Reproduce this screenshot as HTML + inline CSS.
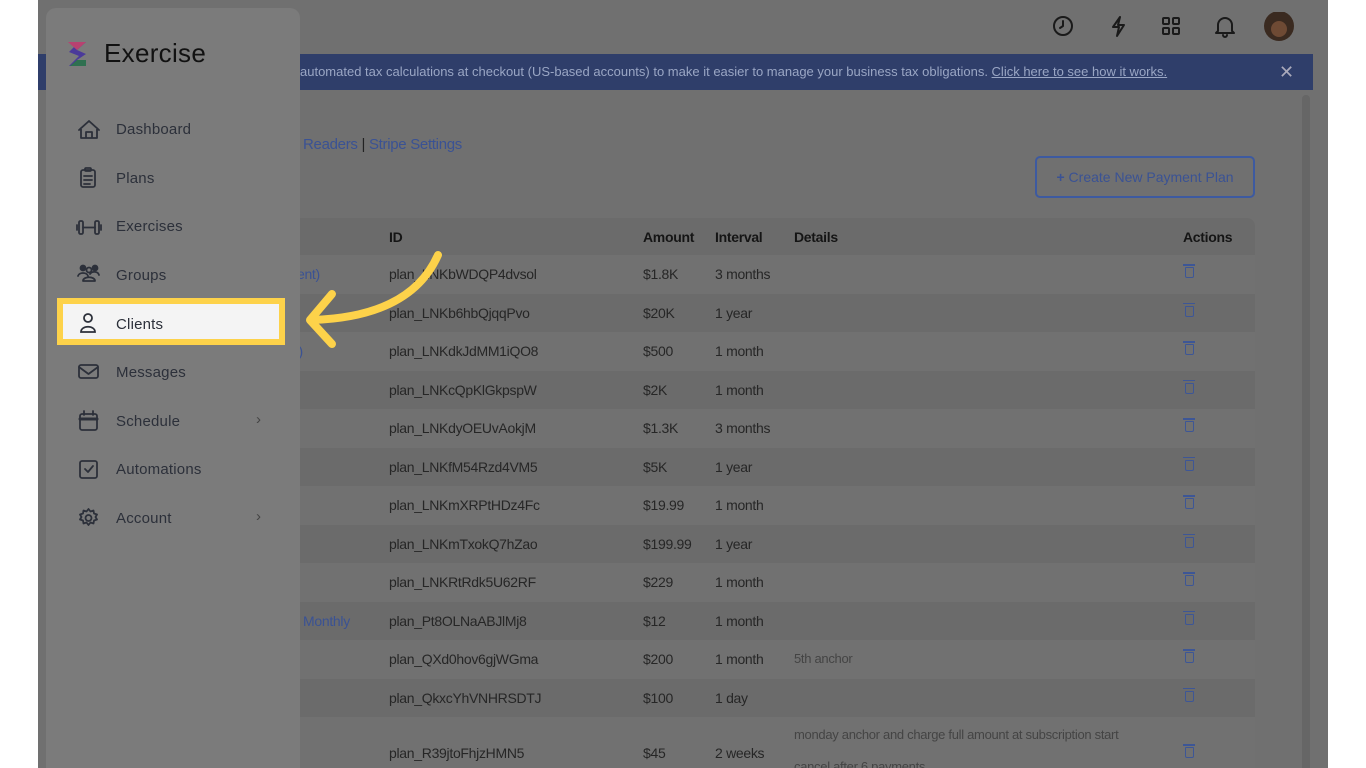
<!DOCTYPE html>
<html><head><meta charset="utf-8"><style>
*{margin:0;padding:0;box-sizing:border-box}
html,body{width:1366px;height:768px;overflow:hidden}
body{background:#fff;position:relative;font-family:"Liberation Sans",sans-serif}
.main{position:absolute;left:38px;top:0;width:1290px;height:768px;background:#707070}
.banner{position:absolute;left:38px;top:54px;width:1275px;height:36px;background:#2f3e6a;color:#9aa6c4;font-size:13px;line-height:36px}
.sb{position:absolute;left:46px;top:8px;width:254px;height:760px;background:#7b7b7b;border-radius:10px 10px 0 0}
.nav{position:absolute;left:116px;font-size:15px;color:#2c303a;letter-spacing:.2px}
.tbl{position:absolute;left:290px;top:218px;width:965px;height:550px;background:#6b6b6b;border-radius:8px 8px 0 0}
.row{position:absolute;left:290px;width:965px;height:38.5px;font-size:14px;letter-spacing:-.3px;color:#262626}
.row span{position:absolute;top:11px}
.tr{position:absolute;left:895px;top:12px;width:9px;height:11px;border:1.5px solid #3d5696;border-radius:1px 1px 2px 2px}
.tr:before{content:"";position:absolute;left:-3px;top:-4px;width:12px;height:1.5px;background:#3d5696}
</style></head><body>
<div class="main"></div>
<div class="banner"><span style="position:absolute;left:262px">automated tax calculations at checkout (US-based accounts) to make it easier to manage your business tax obligations. <u>Click here to see how it works.</u></span><span style="position:absolute;left:1241px;font-size:18px;color:#aab">✕</span></div>
<div style="position:absolute;left:1302px;top:95px;width:8px;height:680px;background:#666;border-radius:4px"></div>
<svg style="position:absolute;left:1050px;top:12px" width="250" height="30" fill="none" stroke="#1a1a1a" stroke-width="2" stroke-linecap="round" stroke-linejoin="round">
<circle cx="13" cy="14" r="9"/><path d="M13 9v5l-3 2"/>
<path d="M70 5l-7 10h6l-2 9 7-11h-6z"/>
<rect x="113" y="6" width="6" height="6" rx="1"/><rect x="123" y="6" width="6" height="6" rx="1"/><rect x="113" y="16" width="6" height="6" rx="1"/><rect x="123" y="16" width="6" height="6" rx="1"/>
<path d="M168 19V13a7 7 0 0 1 14 0v6l2 2h-18zM173 23a2 2 0 0 0 4 0"/>
<circle cx="229" cy="14" r="15" fill="#3a2a20" stroke="none"/><circle cx="229" cy="17" r="8" fill="#6e4a34" stroke="none"/>
</svg>
<div style="position:absolute;left:303px;top:136px;font-size:15px;letter-spacing:-.3px;color:#3a5294">Readers <span style="color:#222">|</span> Stripe Settings</div>
<div style="position:absolute;left:1035px;top:156px;width:220px;height:42px;border:2px solid #3d5aa0;border-radius:5px;color:#3a5294;font-size:14px;line-height:38px;text-align:center"><b>+</b> Create New Payment Plan</div>
<div class="tbl"></div>
<div class="row" style="top:218px;height:37px;font-weight:bold;color:#151515"><span style="left:99px">ID</span><span style="left:353px">Amount</span><span style="left:425px">Interval</span><span style="left:504px">Details</span><span style="left:893px">Actions</span></div>
<div id="rows"></div>
<div class="sb"></div>
<svg style="position:absolute;left:64px;top:40px" width="30" height="28"><path d="M4 2h18l-9 8 9 4-9 6h9v6H5l10-10-10-4 8-8z" fill="#4b3a9a"/><path d="M4 2h18l-9 8z" fill="#b84270"/><path d="M13 20h9v6H6z" fill="#2f7050"/></svg>
<div style="position:absolute;left:104px;top:38px;font-size:26px;color:#111;letter-spacing:.3px">Exercise</div>
<svg style="position:absolute;left:76px;top:118px" width="26" height="420" fill="none" stroke="#2c303a" stroke-width="1.8" stroke-linejoin="round" stroke-linecap="round">
<path d="M3 12l10-9 10 9M5 10v10h16V10M10 20v-6h6v6"/>
<rect x="5" y="52" width="14" height="17" rx="2"/><rect x="9" y="50" width="6" height="3" rx="1"/><path d="M8 58h8M8 62h8M8 66h6"/>
<rect x="3" y="103" width="4" height="13" rx="1.5"/><rect x="19" y="103" width="4" height="13" rx="1.5"/><path d="M1 107v5M25 107v5M7 109.5h12"/>
<circle cx="7" cy="150" r="2.5" fill="#2c303a"/><circle cx="13" cy="152" r="2.5"/><circle cx="19" cy="150" r="2.5" fill="#2c303a"/><path d="M2 158c1-4 9-4 10 0M7 163c0-5 12-5 12 0zM14 156c2-3 8-3 9 1"/>
<rect x="3" y="247" width="19" height="13" rx="2"/><path d="M3 249l9.5 7 9.5-7"/>
<rect x="4" y="296" width="17" height="16" rx="2"/><path d="M4 301h17" stroke-width="3"/><path d="M8 293v4M17 293v4"/>
<rect x="4" y="343" width="17" height="17" rx="2"/><path d="M9 351l3 3 5-6"/>
<circle cx="12.5" cy="400" r="3"/><path d="M12.5 391l2 2.5 3-1 .5 3 3 1-1.5 2.5 1.5 2.5-3 1-.5 3-3-1-2 2.5-2-2.5-3 1-.5-3-3-1 1.5-2.5-1.5-2.5 3-1 .5-3 3 1z"/>
</svg>
<div class="nav" style="top:121px">Dashboard</div>
<div class="nav" style="top:170px">Plans</div>
<div class="nav" style="top:218px">Exercises</div>
<div class="nav" style="top:267px">Groups</div>
<div style="position:absolute;left:57px;top:298px;width:228px;height:47px;border:6px solid #fdd24a;background:#f4f4f4"></div>
<svg style="position:absolute;left:76px;top:312px" width="26" height="26" fill="none" stroke="#2c303a" stroke-width="1.8"><circle cx="12" cy="6" r="4"/><path d="M5 20c0-7 14-7 14 0z"/></svg>
<div class="nav" style="top:316px">Clients</div>
<div class="nav" style="top:364px">Messages</div>
<div class="nav" style="top:413px">Schedule</div>
<div class="nav" style="top:461px">Automations</div>
<div class="nav" style="top:510px">Account</div>
<div class="nav" style="top:411px;left:256px;color:#444">›</div>
<div class="nav" style="top:508px;left:256px;color:#444">›</div>
<svg style="position:absolute;left:0;top:0" width="1366" height="768" fill="none" stroke="#fdd24a" stroke-width="8" stroke-linecap="round" stroke-linejoin="round">
<path d="M438 255C418 300 372 318 312 320"/><path d="M332 294L310 320 332 344"/></svg>
<script>
var d=[["tment)","plan_LNKbWDQP4dvsol","$1.8K","3 months",""],["","plan_LNKb6hbQjqqPvo","$20K","1 year",""],["ent)","plan_LNKdkJdMM1iQO8","$500","1 month",""],["","plan_LNKcQpKlGkpspW","$2K","1 month",""],["nt)","plan_LNKdyOEUvAokjM","$1.3K","3 months",""],["","plan_LNKfM54Rzd4VM5","$5K","1 year",""],["","plan_LNKmXRPtHDz4Fc","$19.99","1 month",""],["","plan_LNKmTxokQ7hZao","$199.99","1 year",""],["","plan_LNKRtRdk5U62RF","$229","1 month",""],["Monthly","plan_Pt8OLNaABJlMj8","$12","1 month",""],["h","plan_QXd0hov6gjWGma","$200","1 month","5th anchor"],["","plan_QkxcYhVNHRSDTJ","$100","1 day",""]];
var h="";d.forEach(function(r,i){var t=255+i*38.5;h+='<div class="row" style="top:'+t+'px;background:'+(i%2?'#6b6b6b':'#717171')+'"><span style="left:'+(r[0]=="Monthly"?13:(r[0].length>4?(r[0]=="tment)"?-8:-2):-10))+'px;color:#3a5294">'+r[0]+'</span><span style="left:99px">'+r[1]+'</span><span style="left:353px">'+r[2]+'</span><span style="left:425px">'+r[3]+'</span><span style="left:504px;color:#444;font-size:13px">'+r[4]+'</span><div class="tr"></div></div>';});
h+='<div class="row" style="top:717px;height:60px;background:#717171"><span style="left:99px;top:28px">plan_R39jtoFhjzHMN5</span><span style="left:353px;top:28px">$45</span><span style="left:425px;top:28px">2 weeks</span><span style="left:504px;top:10px;color:#444;font-size:13px">monday anchor and charge full amount at subscription start</span><span style="left:504px;top:42px;color:#444;font-size:13px">cancel after 6 payments</span><div class="tr" style="top:30px"></div></div>';
document.getElementById("rows").innerHTML=h;
</script>
</body></html>
